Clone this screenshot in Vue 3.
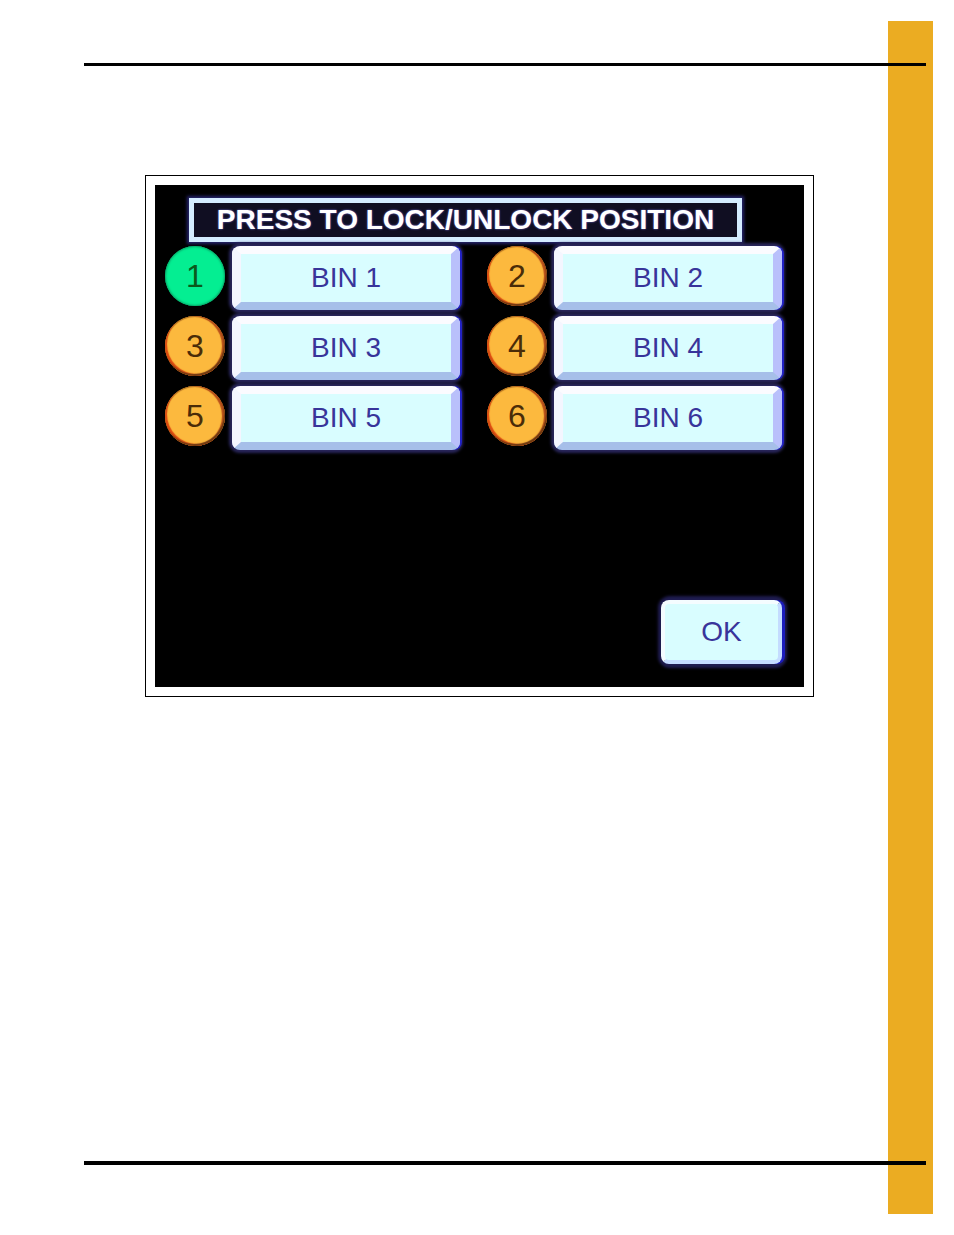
<template>
    <div class="page">
        <div class="stripe"></div>
        <div class="sheet">
            <hr class="rule rule-top">
            <main class="content">
                <div class="frame">
                    <section class="panel">
                        <h1 class="title">PRESS TO LOCK/UNLOCK POSITION</h1>
                        <div class="bins">
                            <div v-for="bin in bins" :key="bin.id" class="bin">
                                <span class="lamp" :class="{ active: bin.id === activeBin }">{{ bin.id }}</span>
                                <button
                                type="button"
                                class="key bin-key"
                                :aria-pressed="bin.id === activeBin"
                                @click="toggleBin(bin.id)"
                                >{{ bin.name }}</button>
                            </div>
                        </div>
                        <div class="actions">
                            <button type="button" class="key ok-key">OK</button>
                        </div>
                    </section>
                </div>
            </main>
            <hr class="rule rule-bottom">
        </div>
    </div>
</template>

<script setup>
import { ref } from 'vue';

const bins = [1, 2, 3, 4, 5, 6].map((id) => ({ id, name: `BIN ${id}` }));

const activeBin = ref(1);

const toggleBin = (id) => {
    activeBin.value = activeBin.value === id ? null : id;
};
</script>

<style>
    body {
        margin: 0;
        background-color: #fff;
    }
</style>

<style scoped>

    .page {
        display: grid;
        grid-template-columns: 1fr 38px 7px;
        min-height: 100vh;
        box-sizing: border-box;
        padding: 21px 21px 21px 84px;
        font-family: "Liberation Sans", Arial, sans-serif;
    }

    .stripe {
        grid-column: 2 / 4;
        grid-row: 1;
        background-color: #ebac22;
    }

    /* the rules run over most of the stripe */
    .sheet {
        grid-column: 1 / 3;
        grid-row: 1;
        display: flex;
        flex-direction: column;
        padding: 42px 0 49px;
    }

    .rule {
        width: 100%;
        margin: 0;
        border: none;
        background-color: #000;
    }

    .rule-top {
        height: 3px;
    }

    .rule-bottom {
        height: 4px;
    }

    .content {
        flex: 1;
        padding: 109px 112px 40px 61px;
    }

    .frame {
        padding: 9px;
        border: 1px solid #000;
        background-color: #fff;
    }

    .panel {
        padding: 13px 22px 23px 10px;
        background-color: #000;
    }

    .title {
        margin: 0 40px 4px 24px;
        border: 5px solid #d4ecff;
        background-color: #100e22;
        box-shadow: 0 0 3px 2px #26246c;
        color: #fff;
        font-size: 28px;
        font-weight: bold;
        line-height: 34px;
        text-align: center;
        text-shadow: 0 0 2px #7c78e8;
        white-space: nowrap;
    }

    .bins {
        display: grid;
        grid-template-columns: 1fr 1fr;
        gap: 6px 27px;
    }

    .bin {
        display: flex;
        align-items: flex-start;
        gap: 7px;
    }

    .lamp {
        flex: none;
        width: 60px;
        height: 60px;
        border-radius: 50%;
        background-color: #fcb93e;
        box-shadow: inset -1px -2px 1px #6e3a12, inset 2px -2px 1px #dc4a10, inset -3px 0 1px #b8501a, inset 0 0 1px 1px #b07020;
        color: #4a2c08;
        font-size: 32px;
        line-height: 60px;
        text-align: center;
    }

    .lamp.active {
        background-color: #04ee92;
        box-shadow: inset 0 0 2px 1px #08a868;
        color: #0a5a1c;
    }

    .key {
        height: 64px;
        padding: 0;
        border-style: solid;
        border-radius: 8px;
        background-color: #d9fdff;
        color: #38349a;
        font-family: inherit;
        font-size: 28px;
        line-height: 32px;
        text-align: center;
        cursor: pointer;
    }

    .bin-key {
        flex: 1;
        border-width: 8px 9px;
        border-color: #fbfbff #b9c0fb #a6bfe9 #f4f6ff;
        box-shadow: 2px 0 0 #2222c4, 0 0 3px 3px #29265c;
    }

    .actions {
        display: flex;
        justify-content: flex-end;
        margin-top: 150px;
    }

    .ok-key {
        width: 121px;
        border-width: 4px;
        border-color: #f4fcff #c4dcff #c4dcff #f4fcff;
        box-shadow: 3px 0 0 #1c1cbc, 1px 0 3px 4px #1f1c50;
    }
</style>
